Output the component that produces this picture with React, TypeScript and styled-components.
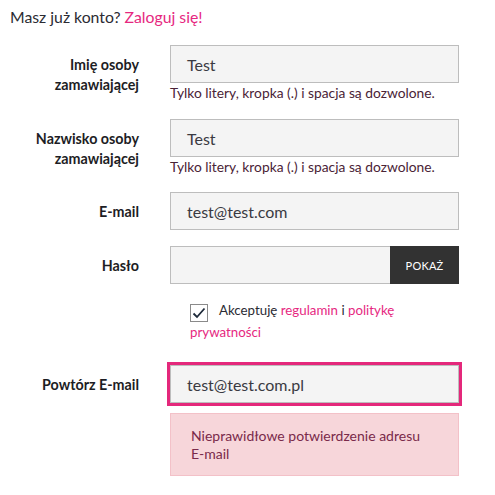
import React from "react";
import styled, { createGlobalStyle } from "styled-components";

const Global = createGlobalStyle`
  html, body { margin: 0; padding: 0; background: #fff; }
  body { font-family: "Lato", "Noto Sans", sans-serif; color: #222; }
`;

const Page = styled.div`
  width: 495px;
  padding: 8px 0 0 10px;
  box-sizing: border-box;
`;

const TopLine = styled.p`
  margin: 0 0 19px;
  font-size: 15.8px;
  line-height: 18px;
  color: #2b2b33;
`;

const Pink = styled.a`
  color: #e6287f;
  text-decoration: none;
`;

const Row = styled.div<{ $mb?: number }>`
  display: grid;
  grid-template-columns: 129px 289px;
  column-gap: 31px;
  margin-bottom: ${(p) => p.$mb ?? 17}px;
`;

const Label = styled.label`
  text-align: right;
  font-weight: 700;
  font-size: 14.3px;
  line-height: 20px;
  color: #1d1d24;
  padding-top: 10px;
`;

const Field = styled.div`
  display: flex;
  flex-direction: column;
`;

const InputBox = styled.div<{ $error?: boolean }>`
  height: 38px;
  box-sizing: border-box;
  border: 1px solid #bdbdbd;
  background: #f4f4f4;
  display: flex;
  align-items: center;
  padding-left: 16px;
  font-size: 16px;
  color: #3a3a42;
  ${(p) => (p.$error ? "box-shadow: 0 0 0 3px #e4287b;" : "")}
`;

const PasswordWrap = styled.div`
  display: flex;
  height: 38px;
`;

const PasswordInput = styled.div`
  flex: 1;
  box-sizing: border-box;
  border: 1px solid #bdbdbd;
  border-right: none;
  background: #f4f4f4;
`;

const ShowButton = styled.button`
  width: 69px;
  border: none;
  background: #323232;
  color: #fff;
  font-family: inherit;
  font-size: 11px;
  letter-spacing: 0.2px;
  padding: 0;
`;

const Hint = styled.div`
  font-size: 13.8px;
  line-height: 16px;
  color: #4a2336;
  margin-top: 2px;
`;

const Consent = styled.p`
  margin: 0 0 22px 170px;
  padding-left: 10px;
  font-size: 13.3px;
  line-height: 21px;
  color: #2b2b33;
  width: 270px;
`;

const Check = styled.span`
  display: inline-flex;
  align-items: center;
  justify-content: center;
  width: 18px;
  height: 18px;
  box-sizing: border-box;
  border: 1px solid #8a8a8a;
  vertical-align: -4px;
  margin-right: 11px;
  background: #fff;
`;

const ErrorBox = styled.div`
  margin-top: 10px;
  background: #f7d6da;
  border: 1px solid #f3c1c8;
  padding: 13px 20px 12px;
  font-size: 14px;
  line-height: 18px;
  color: #7a2a4a;
`;

export default function App() {
  return (
    <>
      <Global />
      <Page>
        <TopLine>
          Masz już konto? <Pink>Zaloguj się!</Pink>
        </TopLine>
        <Row $mb={18}>
          <Label>
            Imię osoby
            <br />
            zamawiającej
          </Label>
          <Field>
            <InputBox>Test</InputBox>
            <Hint>Tylko litery, kropka (.) i spacja są dozwolone.</Hint>
          </Field>
        </Row>
        <Row $mb={17}>
          <Label>
            Nazwisko osoby
            <br />
            zamawiającej
          </Label>
          <Field>
            <InputBox>Test</InputBox>
            <Hint>Tylko litery, kropka (.) i spacja są dozwolone.</Hint>
          </Field>
        </Row>
        <Row $mb={16}>
          <Label>E-mail</Label>
          <Field>
            <InputBox>test@test.com</InputBox>
          </Field>
        </Row>
        <Row $mb={16}>
          <Label>Hasło</Label>
          <Field>
            <PasswordWrap>
              <PasswordInput />
              <ShowButton>POKAŻ</ShowButton>
            </PasswordWrap>
          </Field>
        </Row>
        <Consent>
          <Check>
            <svg width="14" height="12" viewBox="0 0 14 12">
              <path d="M1.5 6.5 L5 10 L12.5 1.5" fill="none" stroke="#1e2a3a" strokeWidth="1.8" />
            </svg>
          </Check>
          Akceptuję <Pink>regulamin</Pink> i <Pink>politykę prywatności</Pink>
        </Consent>
        <Row>
          <Label>Powtórz E-mail</Label>
          <Field>
            <InputBox $error>test@test.com.pl</InputBox>
            <ErrorBox>
              Nieprawidłowe potwierdzenie adresu
              <br />
              E-mail
            </ErrorBox>
          </Field>
        </Row>
      </Page>
    </>
  );
}
